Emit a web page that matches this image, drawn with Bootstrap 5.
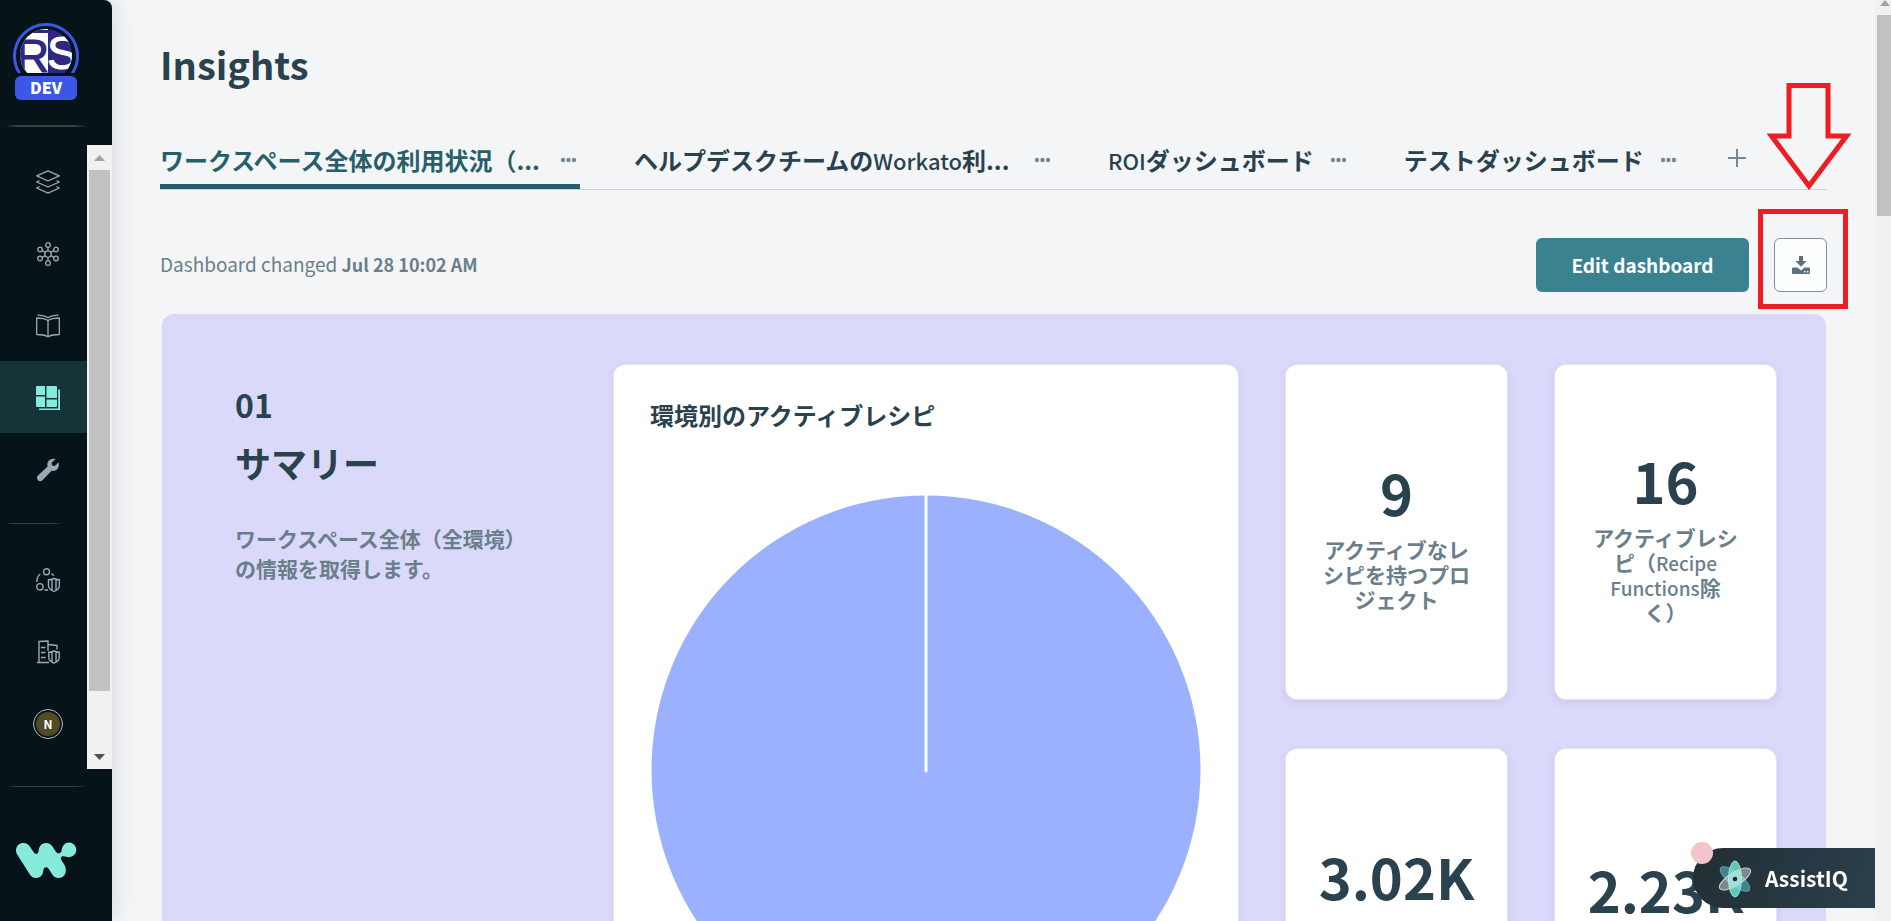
<!DOCTYPE html>
<html lang="ja">
<head>
<meta charset="utf-8">
<meta name="viewport" content="width=device-width, initial-scale=1">
<title>Insights</title>
<link href="https://cdn.jsdelivr.net/npm/bootstrap@5.3.0/dist/css/bootstrap.min.css" rel="stylesheet">
<style>
:root{--ink:#2a424e;--muted-ink:#6a7f8b;--teal:#275f69;--night:#06141a;--mint:#86ebda;--icon:#9aa9b3;--red:#ee1c23}
body{font-family:"Noto Sans CJK JP",sans-serif;color:var(--ink);background:#f3f5f7}
button{font-family:inherit}
.latin{font-size:22px;font-weight:500}
.latin-sm{font-size:19px;font-weight:500}
/* sidebar */
.side{width:112px;background:var(--night);border-top-right-radius:8px;box-shadow:0 0 24px rgba(20,40,50,.14);z-index:2}
.side-head{height:125px;padding:23px 0 0 13px}
.env-logo{width:66px;height:78px}
.fade-rule{height:2px;width:82px;margin-left:5px;background:linear-gradient(90deg,transparent,#33434b 15%,#33434b 85%,transparent)}
.fade-rule.head-rule{margin-bottom:18px}
.fade-rule.thin{height:1px}
.fade-rule.short{width:57px;margin-top:18px;margin-bottom:19px}
.side-scroll{height:624px}
.side-link{height:72px;padding:2px 0 0 36px;color:var(--icon)}
.side-link.active{background:#163338;color:var(--mint)}
.side-link svg{width:24px;height:24px}
.user-dot{width:30px;height:30px;margin-left:-3px;border:1px solid #a7b3ba;background:#504b25;box-shadow:inset 0 0 0 2px var(--night);color:#fff;font-size:12px;line-height:16px}
.bar{background:#f1f1f1}
.bar-side{width:25px;padding:0 2px}
.bar-thumb{background:#c1c1c1}
.arrow-cell{height:25px}
.bar-rest{height:53px}
.side-foot{padding:17px 0 0}
.brand-link{padding:54px 0 0 16px}
/* content */
.stage{padding:38px 48px 0 48px}
.page-title{font-size:38px;line-height:52px}
.tabs{margin-top:44px;height:56px;gap:54px;border-bottom:1px solid #ccd2d6}
.tab-item{gap:16px;height:55px;padding:0 3px 3px 0}
.tab-item.active{box-shadow:inset 0 -5px var(--teal);border-radius:3px 3px 0 0}
.tab-item a{font-size:24px;line-height:36px;font-weight:700;color:var(--ink)}
.tab-item a.tab-long{width:384px}
.tab-item.active a{color:var(--teal)}
.icon-btn{background:none;border:0;padding:0;color:#748894;line-height:0}
.add-tab{margin-left:-6px}
.toolbar{margin-top:48px;height:54px}
.tools{gap:25px}
.changed{font-size:19px;line-height:28px;color:var(--muted-ink);padding-bottom:2px}
.changed strong{font-size:18px}
.btn-edit{width:213px;height:54px;background:#3b8290;color:#fff;font-size:19px;font-weight:700;border-radius:6px;padding:0}
.btn-edit:hover{background:#316f7b;color:#fff}
.btn-get{width:53px;height:54px;background:#fdfefe;border:1px solid #81929c;color:#5b7080;border-radius:6px;padding:0}
.board{margin:22px 1px 0 2px;padding:50px 49px;background:#dbd9f9;border-radius:12px 12px 0 0;display:grid;grid-template-columns:minmax(0,356fr) minmax(0,626fr) minmax(0,223fr) minmax(0,223fr);gap:48px 46px;grid-auto-rows:336px}
.intro{padding:22px 0 0 24px;grid-row:span 2}
.tile{background:#fff;border:1px solid #e3e4ee;border-radius:12px;box-shadow:0 3px 8px rgba(90,90,160,.12)}
.tile-pie{grid-row:span 2;padding:32px 36px}
.tile h3{font-size:24px;line-height:36px;font-weight:700}
.intro-no{font-size:32px;line-height:36px}
.intro h2{font-size:36px;line-height:48px}
.intro-text{font-size:21px;line-height:30px;font-weight:700;color:var(--muted-ink);margin-top:37px;white-space:nowrap}
.pie{width:100%;max-width:550px;margin-top:62px}
.kpi{padding:4px 30px 0}
.kpi-value{font-size:56px;line-height:72px;font-weight:700;margin-bottom:9px}
.kpi-label{width:149px;font-size:21px;line-height:25px;font-weight:700;color:var(--muted-ink)}
.lines-2{min-height:50px}
.lines-3{min-height:75px}
.bar-page{width:16px;padding-left:2px;z-index:1}
.bar-page .bar-thumb{height:201px}
/* overlays */
.assist{right:16px;bottom:13px;width:182px;height:60px;border:0;border-radius:30px 0 0 30px;background:linear-gradient(110deg,#232e34,#2a404c);color:#fff;font-size:21px;font-weight:700;padding:2px 0 0 24px;gap:12px;z-index:3}
.assist-dot{left:-2px;top:-6px;width:22px;height:22px;background:#f2c6c9}
.mark-box{right:-21px;top:-29px;width:90px;height:100px;border:5px solid var(--red);pointer-events:none}
.mark-arrow{right:-24px;bottom:102px;width:84px;height:108px;pointer-events:none;z-index:2}
</style>
</head>
<body class="vh-100 overflow-hidden">
<div class="d-flex vh-100">
  <nav class="side d-flex flex-column flex-shrink-0" aria-label="Main">
    <div class="side-head flex-shrink-0">
      <a href="#" class="d-block env-logo" aria-label="Workspace">
        <svg class="d-block" width="66" height="78" viewBox="0 0 66 78">
          <defs><clipPath id="disc"><path d="M0 0h66v50H0z"/></clipPath><clipPath id="round"><circle cx="33" cy="32" r="26"/></clipPath></defs>
          <g clip-path="url(#disc)">
            <circle cx="33" cy="33" r="31.5" fill="none" stroke="#3c57e5" stroke-width="3"/>
            <g clip-path="url(#round)" font-family="Liberation Sans, sans-serif" font-size="46">
              <path fill="#fff" d="M0 0h35v60H0z"/>
              <text x="3" y="49" fill="#30287f" stroke="#30287f">R</text>
              <path fill="#30287f" d="M35 0h31v60H35zM0 7h35v3H0z"/>
              <text x="34" y="46" fill="#fff" stroke="#fff">S</text>
            </g>
          </g>
          <rect x="2" y="53" width="62" height="24" rx="6" fill="#3c57e5"/>
          <text x="33" y="71" text-anchor="middle" font-size="16" font-weight="900" fill="#fff">DEV</text>
        </svg>
      </a>
    </div>
    <div class="fade-rule head-rule flex-shrink-0"></div>
    <div class="side-scroll d-flex flex-shrink-0">
      <div class="flex-grow-1">
        <a href="#" class="side-link d-flex align-items-center" aria-label="Projects"><svg viewBox="0 0 24 24" fill="none" stroke="currentColor" stroke-width="1.3" stroke-linejoin="round"><path d="M12 .8 23.3 5.9 12 11 .7 5.900z"/><path d="M3.500 10.500.7 12 12 17l11.300-5-2.800-1.500"/><path d="M3.500 16.500.7 18 12 23.200 23.300 18l-2.800-1.500"/></svg></a>
        <a href="#" class="side-link d-flex align-items-center" aria-label="Connections"><svg viewBox="0 0 24 24" fill="none" stroke="currentColor" stroke-width="1.300"><circle cx="12" cy="12" r="3.200"/><circle cx="12" cy="3" r="2.300"/><circle cx="12" cy="21" r="2.300"/><circle cx="4" cy="7.500" r="2.300"/><circle cx="20" cy="7.500" r="2.300"/><circle cx="4" cy="16.500" r="2.300"/><circle cx="20" cy="16.500" r="2.300"/><path d="M12 5.300v3.500M12 15.200v3.500M6 8.600l3.200 1.800M18 8.600l-3.200 1.800M6 15.400l3.200-1.800M18 15.400l-3.200-1.800"/></svg></a>
        <a href="#" class="side-link d-flex align-items-center" aria-label="Library"><svg viewBox="0 0 24 24" fill="none" stroke="currentColor" stroke-width="1.300" stroke-linejoin="round"><path d="M12 6.500C9 4.600 5.500 4 .7 4v16.500c5 0 8.300.6 11.300 2.300 3-1.700 6.300-2.300 11.300-2.300V4c-4.800 0-8.300.6-11.300 2.500zM12 6.500v16.300"/><path d="M1.500 1.200C6 1.400 9 1.900 12 3.700c3-1.800 6-2.300 10.500-2.500"/></svg></a>
        <a href="#" class="side-link active d-flex align-items-center" aria-label="Insights" aria-current="page"><svg viewBox="0 0 24 24" fill="currentColor"><path d="M1 0h8v9H0V1q0-1 1-1zM10.500 0H20q1 0 1 1v11H10.500zM0 10.500h9V21H1q-1 0-1-1zM10.500 13.500H21V20q0 1-1 1h-9.500z"/><path d="M22.200 3.500H24V24H3v-1.600h19.200z"/></svg></a>
        <a href="#" class="side-link d-flex align-items-center" aria-label="Tools"><svg viewBox="0 0 24 24" fill="currentColor"><path d="M22.600 4.200 18.800 8l-2.700-.5-.5-2.700L19.500 1C16.800.2 13.800 1 12.300 3.300c-1.100 1.600-1.200 3.500-.7 5.300L2.500 16.900a3.400 3.400 0 1 0 4.700 4.700l8.400-8.900c4.200 1.200 8.400-2.500 7-8.500z"/></svg></a>
        <div class="fade-rule thin short"></div>
        <a href="#" class="side-link d-flex align-items-center" aria-label="Access"><svg viewBox="0 0 24 24" fill="none" stroke="currentColor" stroke-width="1.400"><circle cx="10.500" cy="3.800" r="3"/><circle cx="3.900" cy="18.800" r="3.200"/><path d="M.8 14c0-3.500 1-6.300 3.500-8M15.500 5.500c1.200.8 1.800 1.600 2.200 2.500M8.500 22h3.500"/><path d="M18 10.500c-2 1-3.800 1.300-5.500 1.200v6c0 3 2.500 4.500 5.500 5.700 3-1.200 5.300-2.700 5.300-5.700v-6c-1.700.1-3.300-.2-5.300-1.200zM16 11.500v11M20 11.500v11"/></svg></a>
        <a href="#" class="side-link d-flex align-items-center" aria-label="Company"><svg viewBox="0 0 24 24" fill="none" stroke="currentColor" stroke-width="1.400"><path d="M1 22.500h12M3 22.500V1.500l9-.5v10M12 4.500l9 1v4M5 7.500h4.500M5 12.500h4.500M5 17.500h4.500"/><path d="M18 11c-2 1-3.500 1.300-5.200 1.200v5.500c0 2.800 2.200 4.200 5.200 5.300 3-1.100 5.200-2.500 5.200-5.300v-5.500C21.500 12.300 20 12 18 11zM16 12v10.500M20 12v10.500"/></svg></a>
        <a href="#" class="side-link d-flex align-items-center text-decoration-none" aria-label="Account"><span class="user-dot rounded-circle d-flex align-items-center justify-content-center fw-bold">N</span></a>
      </div>
      <div class="bar bar-side d-flex flex-column" aria-hidden="true">
        <div class="arrow-cell d-flex align-items-center justify-content-center"><svg width="11" height="6"><path fill="#a3a3a3" d="M0 6 5.500 0 11 6z"/></svg></div>
        <div class="bar-thumb flex-grow-1"></div>
        <div class="bar-rest"></div>
        <div class="arrow-cell d-flex align-items-center justify-content-center"><svg width="11" height="6"><path fill="#505050" d="M0 0h11L5.500 6z"/></svg></div>
      </div>
    </div>
    <div class="side-foot">
      <div class="fade-rule thin"></div>
      <a href="#" class="d-block brand-link" aria-label="Workato"><svg width="62" height="38" viewBox="0 0 62 38"><path fill="#86ebda" d="M0 9.500C0 4.500 3.500 2 7.500 2c3 0 5 1.500 6.500 3.800l3.500 5.200c2.200 3 4.300 2.200 5-.5C23 6 25 2 30 2c3 0 5.200 1.500 6.500 3.600l3.200 4.800c1.800 2.800 4.800 2.500 5.800-.4C46 6 48 1.500 53 1.500a7.300 7.300 0 1 1 0 14.700c-2.500 0-3.500-.9-5.500-.9-2.500 0-3.300 2-2 4l2.700 4.200c3.500 5.500 1.500 13.500-5.700 13.500-3 0-5-1.500-6.500-4l-3.200-5c-1.800-2.800-4.500-2-5.300.5-.5 4-1.700 8.500-7.500 8.500-3 0-5-1.500-6.300-3.700L1.500 14C.6 12.600 0 11.200 0 9.500z"/></svg></a>
    </div>
  </nav>

  <main class="stage flex-grow-1 overflow-hidden">
    <h1 class="page-title fw-bold mb-0">Insights</h1>
    <div class="tabs d-flex">
      <div class="tab-item active d-flex align-items-center"><a href="#" class="tab-long text-decoration-none text-nowrap">ワークスペース全体の利用状況（...</a><button class="icon-btn" aria-label="More"><svg width="17" height="6" fill="currentColor"><circle cx="3" cy="3" r="2.200"/><circle cx="8.500" cy="3" r="2.200"/><circle cx="14" cy="3" r="2.200"/></svg></button></div>
      <div class="tab-item d-flex align-items-center"><a href="#" class="tab-long text-decoration-none text-nowrap">ヘルプデスクチームの<span class="latin">Workato</span>利...</a><button class="icon-btn" aria-label="More"><svg width="17" height="6" fill="currentColor"><circle cx="3" cy="3" r="2.200"/><circle cx="8.500" cy="3" r="2.200"/><circle cx="14" cy="3" r="2.200"/></svg></button></div>
      <div class="tab-item d-flex align-items-center"><a href="#" class="text-decoration-none text-nowrap"><span class="latin">ROI</span>ダッシュボード</a><button class="icon-btn" aria-label="More"><svg width="17" height="6" fill="currentColor"><circle cx="3" cy="3" r="2.200"/><circle cx="8.500" cy="3" r="2.200"/><circle cx="14" cy="3" r="2.200"/></svg></button></div>
      <div class="tab-item d-flex align-items-center"><a href="#" class="text-decoration-none text-nowrap">テストダッシュボード</a><button class="icon-btn" aria-label="More"><svg width="17" height="6" fill="currentColor"><circle cx="3" cy="3" r="2.200"/><circle cx="8.500" cy="3" r="2.200"/><circle cx="14" cy="3" r="2.200"/></svg></button></div>
      <button class="icon-btn add-tab mb-2" aria-label="Add dashboard"><svg width="18" height="18" stroke="currentColor" stroke-width="2"><path d="M9 0v18M0 9h18"/></svg></button>
    </div>
    <div class="toolbar d-flex align-items-center justify-content-between position-relative">
      <div class="changed">Dashboard changed <strong>Jul 28 10:02 AM</strong></div>
      <div class="tools d-flex">
        <button class="btn btn-edit">Edit dashboard</button>
        <button class="btn btn-get d-flex align-items-center justify-content-center" aria-label="Download"><svg width="18" height="18" viewBox="0 0 18 18" fill="currentColor"><path d="M7 0h4v5h3.500L9 10.800 3.500 5H7z"/><path fill-rule="evenodd" d="M1 11.500h4.500L9 14.500l3.500-3H17q1 0 1 1V17q0 1-1 1H1q-1 0-1-1v-4.500q0-1 1-1zM12 15h1.500v1.500H12zM15 15h1.500v1.500H15z"/></svg></button>
      </div>
      <div class="mark-box position-absolute" aria-hidden="true"></div>
      <svg class="mark-arrow position-absolute" viewBox="0 0 84 108" fill="none" stroke="#ee1c23" stroke-width="5" aria-hidden="true"><path d="M22 3.500h39v50.500h18.500L42 104 4.500 54H22z"/></svg>
    </div>

    <section class="board">
      <div class="intro">
        <div class="intro-no fw-bold">01</div>
        <h2 class="fw-bold mt-3 mb-0">サマリー</h2>
        <p class="intro-text mb-0">ワークスペース全体（全環境）<br>の情報を取得します。</p>
      </div>
      <div class="tile tile-pie">
        <h3 class="mb-0">環境別のアクティブレシピ</h3>
        <svg class="pie d-block mx-auto" viewBox="0 0 550 550"><circle cx="275" cy="275" r="274.500" fill="#9bb1fe"/><path d="M275 0v276" stroke="#fff" stroke-width="3" stroke-linecap="round"/></svg>
      </div>
      <div class="tile kpi text-center d-flex flex-column align-items-center justify-content-center"><div class="kpi-value">9</div><div class="kpi-label">アクティブなレシピを持つプロジェクト</div></div>
      <div class="tile kpi text-center d-flex flex-column align-items-center justify-content-center"><div class="kpi-value">16</div><div class="kpi-label">アクティブレシピ（<span class="latin-sm">Recipe Functions</span>除<br>く）</div></div>
      <div class="tile kpi text-center d-flex flex-column align-items-center justify-content-center"><div class="kpi-value">3.02K</div><div class="kpi-label lines-3"></div></div>
      <div class="tile kpi text-center d-flex flex-column align-items-center justify-content-center"><div class="kpi-value">2.23K</div><div class="kpi-label lines-2"></div></div>
    </section>
  </main>

  <div class="bar bar-page flex-shrink-0" aria-hidden="true"><svg class="d-block" width="14" height="15"><path fill="#a3a3a3" d="M3 6h10L8 0z"/></svg><div class="bar-thumb"></div></div>
</div>

<button class="assist position-fixed d-flex align-items-center">
  <span class="assist-dot position-absolute rounded-circle"></span>
  <svg width="36" height="38" viewBox="-18 -19 36 38"><ellipse rx="6.500" ry="18" transform="rotate(-52)" fill="#4b96a0" fill-opacity=".8" stroke="#5aa8b0"/><ellipse rx="6.500" ry="18" fill="#6fe0d0" fill-opacity=".85" stroke="#7deedd"/><ellipse rx="6.500" ry="18" transform="rotate(58)" fill="#e8f4f4" fill-opacity=".45" stroke="#c9d6d8"/><circle r="2.300" fill="#1d2a30"/></svg>
  <span>AssistIQ</span>
</button>
<script src="https://cdn.jsdelivr.net/npm/bootstrap@5.3.0/dist/js/bootstrap.bundle.min.js"></script>
</body>
</html>
